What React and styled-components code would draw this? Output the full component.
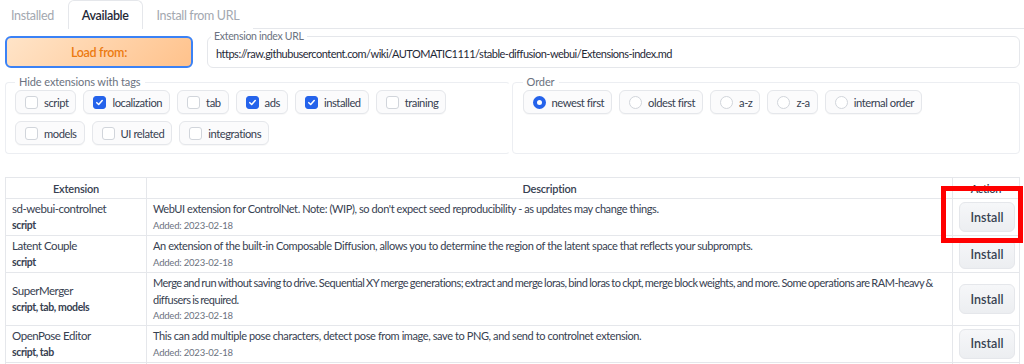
import React from "react";
import styled, { createGlobalStyle } from "styled-components";

const Global = createGlobalStyle`
  html, body { margin: 0; padding: 0; background: #fff; }
  body { font-family: Lato, "Open Sans", sans-serif; color: #374151; }
  * { box-sizing: border-box; }
`;

const Page = styled.div`
  width: 1024px;
  height: 364px;
  overflow: hidden;
  display: flex;
  flex-direction: column;
`;

const TabBar = styled.div`
  display: flex;
  height: 31px;
  align-items: flex-end;
  border-bottom: 1px solid #e5e7eb;
`;

const Tab = styled.div`
  height: 29px;
  padding: 0 13px;
  display: flex;
  align-items: center;
  font-size: 12.5px;
  letter-spacing: -0.35px;
  color: ${(p) => (p.$active ? "#1f2937" : "#a3a8b0")};
  font-weight: ${(p) => (p.$active ? 600 : 400)};
  background: #fff;
  margin-bottom: -1px;
  border: 1px solid ${(p) => (p.$active ? "#e5e7eb" : "transparent")};
  border-bottom: none;
  border-radius: 6px 6px 0 0;
  &:first-child { padding-left: 10px; }
`;

const LoadRow = styled.div`
  display: flex;
  gap: 14px;
  padding: 7px 4px 0 5px;
  align-items: stretch;
`;

const LoadButton = styled.button`
  width: 188px;
  height: 32px;
  border: 2px solid #3b82f6;
  border-radius: 6px;
  background: linear-gradient(135deg, #ffe4c8 0%, #ffc28c 100%);
  color: #ec7a10;
  font-family: inherit;
  font-size: 12.5px;
  letter-spacing: -0.3px;
  font-weight: 600;
`;

const UrlField = styled.div`
  position: relative;
  flex: 1;
  height: 32px;
  border: 1px solid #e5e7eb;
  border-radius: 6px;
  display: flex;
  align-items: center;
  padding: 3px 8px 0;
  font-size: 11px;
  letter-spacing: -0.5px;
  color: #1f2937;
`;

const FloatLabel = styled.span`
  position: absolute;
  left: 3px;
  top: -7px;
  background: #fff;
  padding: 0 3px;
  font-size: 10.5px;
  letter-spacing: -0.3px;
  line-height: 12px;
  color: #6b7280;
`;

const Filters = styled.div`
  display: flex;
  gap: 2px;
  padding: 8px 4px 0 5px;
`;

const Group = styled.fieldset`
  flex: ${(p) => p.$flex};
  margin: 0;
  min-width: 0;
  border: 1px solid #eceef2;
  border-right-color: ${(p) => (p.$last ? "#eceef2" : "transparent")};
  border-radius: 4px;
  padding: 2px 9px 8px ${(p) => p.$pl}px;
`;

const Legend = styled.legend`
  font-size: 11px;
  letter-spacing: -0.1px;
  line-height: 12px;
  color: #6b7280;
  padding: 0 4px;
  margin-left: 0;
`;

const Chips = styled.div`
  display: flex;
  flex-wrap: wrap;
  gap: 7px;
`;

const Chip = styled.label`
  height: 24px;
  display: flex;
  align-items: center;
  gap: 6px;
  padding: 0 7px 0 9px;
  border: 1px solid #e5e7eb;
  border-radius: 6px;
  background: #fbfbfc;
  font-size: 11.2px;
  letter-spacing: -0.45px;
  color: #374151;
  box-shadow: 0 1px 1px rgba(0,0,0,0.03);
`;

const Box = styled.span`
  width: 13px;
  height: 13px;
  border-radius: 3px;
  border: 1px solid ${(p) => (p.$on ? "#2563eb" : "#d1d5db")};
  background: ${(p) => (p.$on ? "#2563eb" : "#fff")};
  display: flex;
  align-items: center;
  justify-content: center;
`;

const Radio = styled.span`
  width: 13px;
  height: 13px;
  border-radius: 50%;
  border: ${(p) => (p.$on ? "4px solid #2563eb" : "1px solid #d1d5db")};
  background: #fff;
`;

const TableWrap = styled.div`
  position: relative;
  margin: 23px 4px 0 5px;
`;

const Table = styled.table`
  width: 100%;
  border-collapse: collapse;
  table-layout: fixed;
  font-size: 11px;
  color: #374151;
`;

const Th = styled.th`
  height: 21px;
  border: 1px solid #e5e7eb;
  font-weight: 600;
  font-size: 11px;
  letter-spacing: -0.2px;
  color: #374151;
  text-align: center;
  padding: 0 6px;
`;

const Td = styled.td`
  border: 1px solid #e5e7eb;
  padding: ${(p) => (p.$top ? "2px 4px 1px 6px" : "1px 6px")};
  vertical-align: ${(p) => (p.$top ? "top" : "middle")};
  text-align: ${(p) => (p.$center ? "center" : "left")};
`;

const Name = styled.div`
  line-height: 16px;
  font-size: 11.5px;
  letter-spacing: -0.45px;
`;

const Tags = styled.div`
  line-height: 16px;
  font-size: 10.5px;
  letter-spacing: -0.4px;
  font-weight: 700;
  color: #374151;
`;

const Desc = styled.div`
  line-height: 16.5px;
  font-size: 11px;
  letter-spacing: ${(p) => (p.$tight ? "-0.5px" : "-0.4px")};
  word-spacing: ${(p) => (p.$tight ? "-0.6px" : "0")};
`;

const Added = styled.div`
  line-height: 16px;
  font-size: 9.5px;
  letter-spacing: -0.2px;
  color: #6b7280;
`;

const InstallButton = styled.button`
  width: 56px;
  height: 30px;
  border: 1px solid #e5e7eb;
  border-radius: 6px;
  background: linear-gradient(180deg, #f6f7f9, #eceef1);
  font-family: inherit;
  font-size: 12.5px;
  font-weight: 600;
  color: #374151;
`;

const Highlight = styled.div`
  position: absolute;
  left: 936px;
  top: 9px;
  width: 82px;
  height: 57px;
  border: 5px solid #ff0000;
`;

const Check = () => (
  <svg width="9" height="9" viewBox="0 0 10 10">
    <path d="M2 5.2 L4.1 7.2 L8 2.9" stroke="#fff" strokeWidth="1.7" fill="none" strokeLinecap="round" strokeLinejoin="round" />
  </svg>
);

const tags = [
  ["script", false],
  ["localization", true],
  ["tab", false],
  ["ads", true],
  ["installed", true],
  ["training", false],
  ["models", false],
  ["UI related", false],
  ["integrations", false],
];

const orders = ["newest first", "oldest first", "a-z", "z-a", "internal order"];

const rows = [
  {
    name: "sd-webui-controlnet",
    tags: "script",
    desc: "WebUI extension for ControlNet. Note: (WIP), so don't expect seed reproducibility - as updates may change things.",
    h: 37,
  },
  {
    name: "Latent Couple",
    tags: "script",
    desc: "An extension of the built-in Composable Diffusion, allows you to determine the region of the latent space that reflects your subprompts.",
    h: 37,
  },
  {
    name: "SuperMerger",
    tags: "script, tab, models",
    desc: "Merge and run without saving to drive. Sequential XY merge generations; extract and merge loras, bind loras to ckpt, merge block weights, and more. Some operations are RAM-heavy & diffusers is required.",
    h: 52,
    tight: true,
  },
  {
    name: "OpenPose Editor",
    tags: "script, tab",
    desc: "This can add multiple pose characters, detect pose from image, save to PNG, and send to controlnet extension.",
    h: 36,
  },
  {
    name: "Depth Maps",
    tags: "script",
    desc: "Creates depth maps from the generated images.",
    h: 37,
  },
];

export default function App() {
  return (
    <Page>
      <Global />
      <TabBar>
        <Tab>Installed</Tab>
        <Tab $active>Available</Tab>
        <Tab>Install from URL</Tab>
      </TabBar>
      <LoadRow>
        <LoadButton>Load from:</LoadButton>
        <UrlField>
          <FloatLabel>Extension index URL</FloatLabel>
          https://raw.githubusercontent.com/wiki/AUTOMATIC1111/stable-diffusion-webui/Extensions-index.md
        </UrlField>
      </LoadRow>
      <Filters>
        <Group $flex="505" $pl={9}>
          <Legend>Hide extensions with tags</Legend>
          <Chips>
            {tags.map(([t, on]) => (
              <Chip key={t}>
                <Box $on={on}>{on && <Check />}</Box>
                {t}
              </Chip>
            ))}
          </Chips>
        </Group>
        <Group $flex="508" $pl={10} $last>
          <Legend>Order</Legend>
          <Chips>
            {orders.map((o, i) => (
              <Chip key={o}>
                <Radio $on={i === 0} />
                {o}
              </Chip>
            ))}
          </Chips>
        </Group>
      </Filters>
      <TableWrap>
        <Table>
          <colgroup>
            <col style={{ width: 141 }} />
            <col />
            <col style={{ width: 67 }} />
          </colgroup>
          <thead>
            <tr>
              <Th>Extension</Th>
              <Th>Description</Th>
              <Th>Action</Th>
            </tr>
          </thead>
          <tbody>
            {rows.map((r) => (
              <tr key={r.name} style={{ height: r.h }}>
                <Td>
                  <Name>{r.name}</Name>
                  <Tags>{r.tags}</Tags>
                </Td>
                <Td $top>
                  <Desc $tight={r.tight}>{r.desc}</Desc>
                  <Added>Added: 2023-02-18</Added>
                </Td>
                <Td $center>
                  <InstallButton>Install</InstallButton>
                </Td>
              </tr>
            ))}
          </tbody>
        </Table>
        <Highlight />
      </TableWrap>
    </Page>
  );
}
